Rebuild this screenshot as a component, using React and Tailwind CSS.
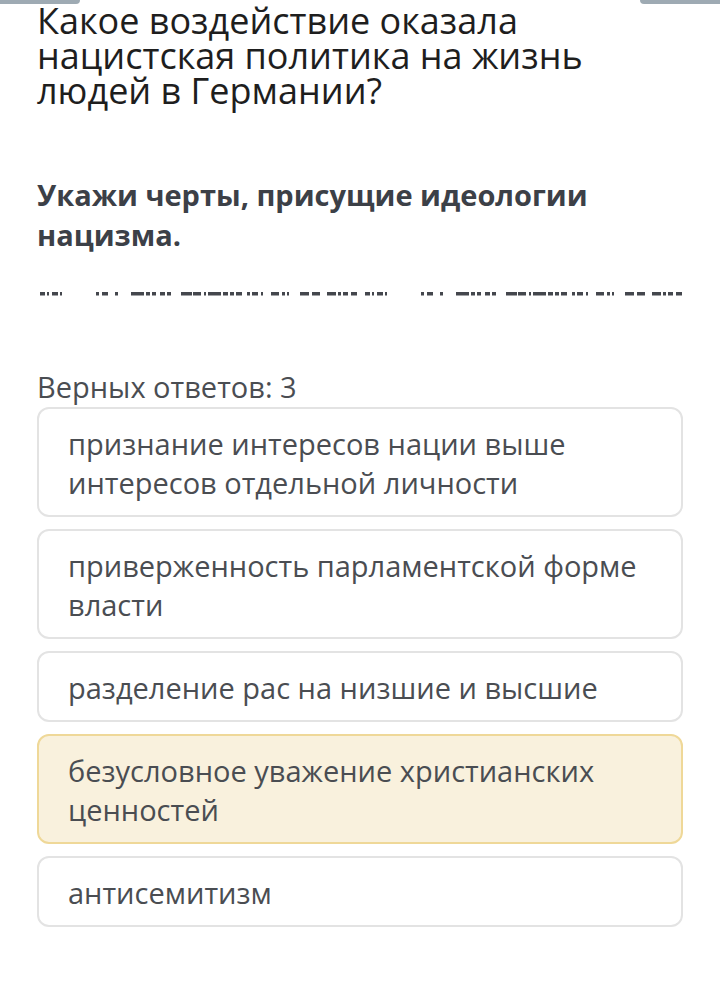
import React from 'react';

// rough "redacted" dash pattern, one half; the second half repeats it 325px later
const half = [
  [0, 5], [7, 2], [11, 6], [19, 2],
  [53, 3], [59, 6], [71, 3],
  [87, 12], [101, 4], [107, 4], [114, 5], [121, 4],
  [134, 10], [146, 8], [156, 2], [160, 12], [174, 5], [181, 4], [187, 6],
  [197, 3], [202, 6], [210, 2],
  [220, 8], [230, 3], [235, 2],
  [248, 9], [259, 8],
  [273, 9], [284, 3], [289, 5], [296, 6],
];
const scaled = half.map(([x, w]) => [Math.round(x * 1.05), Math.round(w * 1.05)]);
const dashes = [...scaled.map(([x, w]) => [x + 3, w]), ...scaled.map(([x, w]) => [x + 328, w])];

const options = [
  { text: 'признание интересов нации выше интересов отдельной личности' },
  { text: 'приверженность парламентской форме власти' },
  { text: 'разделение рас на низшие и высшие' },
  { text: 'безусловное уважение христианских ценностей', selected: true },
  { text: 'антисемитизм' },
];

export default function App() {
  return (
    <div className="relative w-[720px] h-[1004px] bg-white overflow-hidden" style={{ fontFamily: '"Open Sans", sans-serif' }}>
      {/* top bars */}
      <div className="absolute left-0 top-0 w-[80px] h-[4px] rounded-br-full bg-[#9eaab3]" />
      <div className="absolute right-0 top-0 w-[80px] h-[4px] rounded-bl-full bg-[#9eaab3]" />

      <div className="px-[37px]">
        <h1 className="pt-[3px] text-[36px] leading-[35px] text-[#1e1e1e]">
          Какое воздействие оказала<br />нацистская политика на жизнь<br />людей в Германии?
        </h1>

        <h2 className="mt-[67px] text-[29px] leading-[40px] font-bold text-[#3c4047]">
          Укажи черты, присущие идеологии<br />нацизма.
        </h2>

        <div className="mt-[37px] h-[4px]">
          <svg width="646" height="4" viewBox="0 0 646 4" className="block">
            {dashes.map(([x, w], i) => (
              <rect key={i} x={x} y="0" width={w} height="3.5" fill="#44474d" />
            ))}
          </svg>
        </div>

        <div className="mt-[76px] text-[29px] leading-[30px] text-[#4a4d52]">Верных ответов: 3</div>

        <div className="mt-[5px] flex flex-col gap-[12px]">
          {options.map((o, i) => (
            <div
              key={i}
              className={
                o.selected
                  ? 'rounded-[12px] border-2 border-[#efd898] bg-[#f9f1dd] pl-[29px] pr-[24px] pt-[15px] pb-[13px] text-[29px] leading-[39px] text-[#4a4d52]'
                  : 'rounded-[12px] border-2 border-[#e3e3e3] bg-white pl-[29px] pr-[24px] pt-[15px] pb-[13px] text-[29px] leading-[39px] text-[#4a4d52]'
              }
            >
              {o.text}
            </div>
          ))}
        </div>
      </div>
    </div>
  );
}
